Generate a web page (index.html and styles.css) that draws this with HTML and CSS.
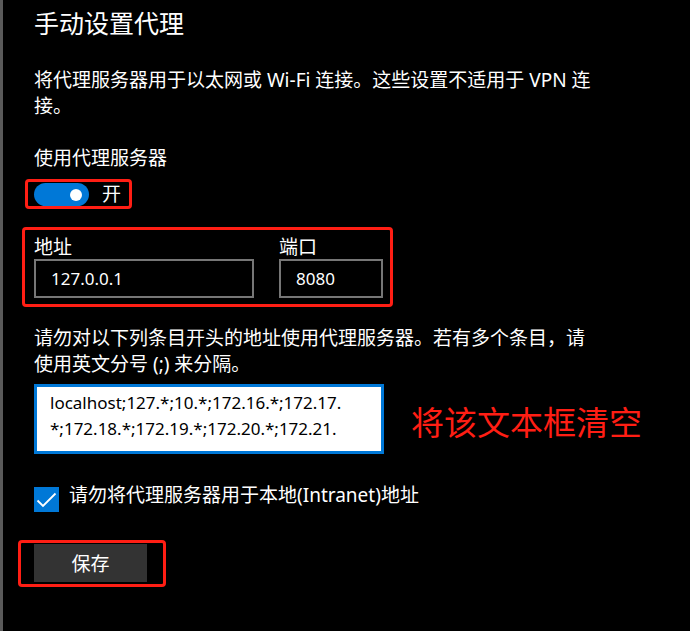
FILE: index.html
```html
<!DOCTYPE html>
<html>
<title>代理</title>

<head>
    <meta charset="utf-8">
    <link rel="stylesheet" href="styles.css">
</head>

<body>
    <div class="page">
        <h1 class="title">手动设置代理</h1>
        <p class="desc">将代理服务器用于以太网或 Wi-Fi 连接。这些设置不适用于 VPN 连接。</p>

        <div class="label">使用代理服务器</div>
        <div class="toggle_row marked">
            <span class="toggle"><span class="knob"></span></span>
            <span class="toggle_text">开</span>
            <span class="mark mark_toggle"></span>
        </div>

        <div class="fields marked">
            <div class="field field_addr">
                <div class="field_label">地址</div>
                <div class="input">127.0.0.1</div>
            </div>
            <div class="field field_port">
                <div class="field_label">端口</div>
                <div class="input">8080</div>
            </div>
            <span class="mark mark_fields"></span>
        </div>

        <p class="desc desc_2">请勿对以下列条目开头的地址使用代理服务器。若有多个条目，请使用英文分号 (;) 来分隔。</p>
        <div class="except_row">
            <div class="textbox">localhost;127.*;10.*;172.16.*;172.17.<br>*;172.18.*;172.19.*;172.20.*;172.21.</div>
            <div class="note">将该文本框清空</div>
        </div>

        <div class="check_row">
            <span class="checkbox">
                <svg width="25" height="25" viewBox="0 0 25 25"><path d="M3.5 13.5 L9 19 L21.5 6.5" fill="none" stroke="#fff" stroke-width="1.8"/></svg>
            </span>
            <span class="check_text">请勿将代理服务器用于本地(Intranet)地址</span>
        </div>

        <div class="save_wrap marked">
            <button class="btn">保存</button>
            <span class="mark mark_btn"></span>
        </div>

        <h2 class="title next">相关设置</h2>
    </div>
</body>

</html>
```

FILE: styles.css
```css
* {
    padding: 0px;
    margin: 0px;
    box-sizing: border-box;
}
body {
    background-color: #000;
    color: #fff;
    font-family: "Noto Sans", "Noto Sans CJK SC", sans-serif;
    font-size: 19px;
    overflow: hidden;
}
.page {
    height: 631px;
    border-left: 3px solid #5a5a5a;
    padding: 6px 0px 0px 31px;
    overflow: hidden;
}
.title {
    font-size: 25px;
    font-weight: normal;
    line-height: 34px;
}
.desc {
    width: 563px;
    line-height: 26px;
    margin-top: 27px;
}
.label {
    line-height: 26px;
    margin-top: 26px;
}
.marked {
    position: relative;
    width: max-content;
}
.mark {
    position: absolute;
    border: 3px solid #ff1e14;
    border-radius: 4px;
}
.toggle_row {
    display: flex;
    align-items: center;
    margin-top: 12px;
    height: 23px;
}
.toggle {
    display: flex;
    align-items: center;
    width: 55px;
    height: 23px;
    border-radius: 12px;
    background-color: #0078d7;
}
.knob {
    width: 12px;
    height: 12px;
    border-radius: 50%;
    background-color: #fff;
    margin-left: auto;
    margin-right: 7px;
}
.toggle_text {
    margin-left: 13px;
    line-height: 23px;
}
.mark_toggle {
    top: -4px;
    bottom: -3px;
    left: -9px;
    right: -11px;
}
.fields {
    display: flex;
    gap: 25px;
    margin-top: 29px;
}
.field_label {
    line-height: 24px;
}
.input {
    height: 39px;
    border: 2px solid #767676;
    padding-left: 15px;
    font-size: 17px;
    line-height: 35px;
}
.field_addr {
    width: 220px;
}
.field_port {
    width: 104px;
}
.mark_fields {
    top: -8px;
    bottom: -9px;
    left: -12px;
    right: -10px;
}
.desc_2 {
    margin-top: 27px;
}
.except_row {
    display: flex;
    align-items: flex-start;
    margin-top: 7px;
}
.textbox {
    width: 350px;
    height: 70px;
    background-color: #fff;
    border: 3px solid #0078d7;
    color: #000;
    font-size: 17px;
    line-height: 26px;
    padding: 3px 0px 0px 13px;
    white-space: nowrap;
    overflow: hidden;
}
.note {
    color: #ff1e14;
    font-size: 33px;
    line-height: 40px;
    margin: 19px 0px 0px 27px;
}
.check_row {
    display: flex;
    align-items: flex-start;
    margin-top: 29px;
}
.checkbox {
    display: block;
    width: 25px;
    height: 25px;
    margin-top: 4px;
    background-color: #0078d7;
}
.checkbox svg {
    display: block;
}
.check_text {
    line-height: 25px;
    margin-left: 10px;
}
.save_wrap {
    margin-top: 32px;
}
.btn {
    display: block;
    width: 113px;
    height: 38px;
    padding-top: 2px;
    border: none;
    background-color: #333;
    color: #fff;
    font-family: inherit;
    font-size: 19px;
    line-height: 36px;
}
.mark_btn {
    top: -4px;
    bottom: -5px;
    left: -16px;
    right: -19px;
}
.next {
    margin-top: 45px;
    color: #ddd;
}
```
